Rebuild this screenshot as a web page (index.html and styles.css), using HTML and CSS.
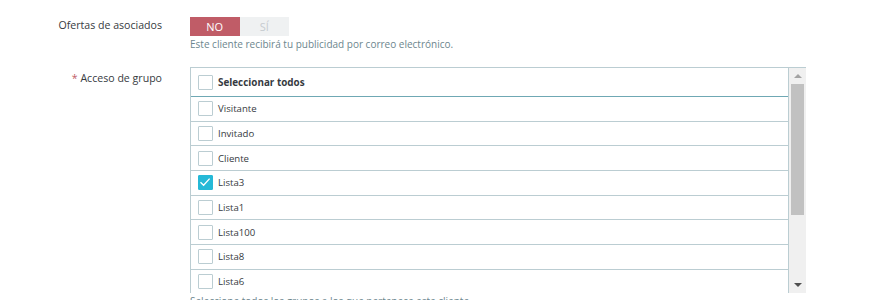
FILE: index.html
```html
<!DOCTYPE html>
<html lang="es">
<head>
    <meta charset="UTF-8">
    <meta name="viewport" content="width=device-width, initial-scale=1.0">
    <title>Cliente</title>
    <link rel="stylesheet" href="styles.css">
</head>
<body>
    <div class="form-group">
        <label class="control-label">Ofertas de asociados</label>
        <div class="control">
            <div class="switch">
                <span class="switch-opt active">NO</span>
                <span class="switch-opt">SÍ</span>
            </div>
            <p class="help">Este cliente recibirá tu publicidad por correo electrónico.</p>
        </div>
    </div>

    <div class="form-group groups">
        <label class="control-label"><span class="required">*</span> Acceso de grupo</label>
        <div class="control">
            <div class="choice-box">
                <div class="choice-list">
                    <div class="choice head"><span class="check"></span>Seleccionar todos</div>
                    <div class="choice"><span class="check"></span>Visitante</div>
                    <div class="choice"><span class="check"></span>Invitado</div>
                    <div class="choice"><span class="check"></span>Cliente</div>
                    <div class="choice"><span class="check checked">
                        <svg width="14" height="14" viewBox="0 0 14 14"><path d="M2.5 7.2 L5.6 10.2 L11.6 3.6" fill="none" stroke="#fff" stroke-width="1.3"/></svg>
                    </span>Lista3</div>
                    <div class="choice"><span class="check"></span>Lista1</div>
                    <div class="choice"><span class="check"></span>Lista100</div>
                    <div class="choice"><span class="check"></span>Lista8</div>
                    <div class="choice"><span class="check"></span>Lista6</div>
                </div>
                <div class="scrollbar">
                    <span class="arrow up"></span>
                    <div class="track"><div class="thumb"></div></div>
                    <span class="arrow down"></span>
                </div>
            </div>
            <p class="help">Seleccione todos los grupos a los que pertenece este cliente.</p>
        </div>
    </div>
</body>
</html>
```

FILE: styles.css
```css
body{
    font-family: 'Open Sans', 'Noto Sans', sans-serif;
    background: #fff;
    color: #363a41;
    margin: 0;
    padding-top: 15px;
}
.form-group{
    display: flex;
    align-items: flex-start;
}
.control-label{
    width: 162px;
    flex: none;
    text-align: right;
    font-size: 10.6px;
    line-height: 20px;
}
.required{
    color: #c05c67;
}
.control{
    margin-left: 28px;
}
.switch{
    display: flex;
    width: 99px;
    height: 19px;
    margin-top: 2px;
}
.switch-opt{
    flex: 1;
    text-align: center;
    font-size: 11px;
    line-height: 19px;
    background: #eff1f2;
    color: #c6cbcf;
}
.switch-opt.active{
    background: #c05c67;
    color: #fff;
}
.help{
    margin: 1px 0 0;
    font-size: 10px;
    line-height: 14px;
    color: #6c868e;
}
.groups{
    margin-top: 16px;
}
.groups .control-label{
    padding-top: 1px;
}
.choice-box{
    display: flex;
    width: 615px;
    height: 225px;
    overflow: hidden;
    border-left: 1px solid #bbcdd2;
    border-top: 1px solid #bbcdd2;
}
.choice-list{
    flex: 1;
    border-right: 1px solid #bbcdd2;
}
.choice{
    display: flex;
    align-items: center;
    height: 23.7px;
    border-bottom: 1px solid #bbcdd2;
    font-size: 9.6px;
    padding-left: 7px;
}
.choice.head{
    height: 28px;
    border-bottom: 1px solid #6fa8b4;
    font-weight: 700;
    font-size: 9.9px;
}
.check{
    width: 13px;
    height: 13px;
    border: 1px solid #bbcdd2;
    background: #fff;
    margin-right: 5px;
    flex: none;
    border-radius: 1px;
}
.check.checked{
    background: #25b9d7;
    border-color: #25b9d7;
}
.check svg{
    display: block;
    margin: -1px 0 0 -1px;
}
.scrollbar{
    width: 17px;
    flex: none;
    background: #f0f0f0;
    display: flex;
    flex-direction: column;
    align-items: center;
}
.arrow{
    width: 0;
    height: 0;
    border-left: 4px solid transparent;
    border-right: 4px solid transparent;
    margin: 6px 0;
}
.arrow.up{
    border-bottom: 4px solid #a3a3a3;
}
.arrow.down{
    border-top: 4px solid #505050;
}
.track{
    flex: 1;
    width: 100%;
}
.thumb{
    width: 13px;
    height: 131px;
    margin: 0 auto;
    background: #c1c1c1;
}
```
